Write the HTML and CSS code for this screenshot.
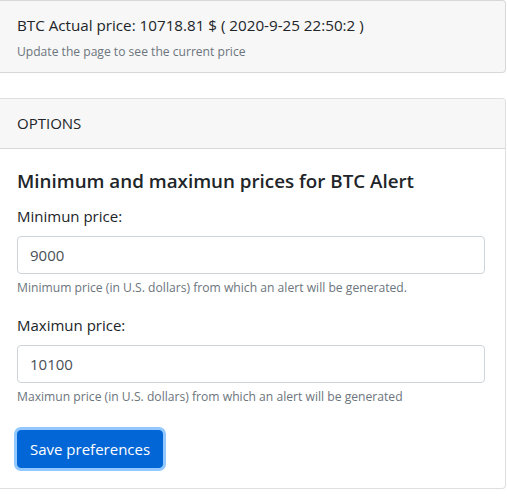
FILE: index.html
```html
<!DOCTYPE html>
<html lang="en">
<head>
<meta charset="utf-8">
<title>BTC Alert</title>
<link rel="stylesheet" href="styles.css">
</head>
<body>
<div class="page">
  <div class="card card-price">
    <div class="price-line">BTC Actual price: 10718.81 $ ( 2020-9-25 22:50:2 )</div>
    <div class="price-note">Update the page to see the current price</div>
  </div>

  <div class="card">
    <div class="card-header">OPTIONS</div>
    <div class="card-body">
      <h5 class="card-title">Minimum and maximun prices for BTC Alert</h5>
      <form>
        <div class="form-group">
          <label class="form-label" for="min">Minimun price:</label>
          <input class="form-control" id="min" type="text" value="9000">
          <small class="form-text">Minimum price (in U.S. dollars) from which an alert will be generated.</small>
        </div>
        <div class="form-group">
          <label class="form-label" for="max">Maximun price:</label>
          <input class="form-control" id="max" type="text" value="10100">
          <small class="form-text">Maximun price (in U.S. dollars) from which an alert will be generated</small>
        </div>
        <button class="btn btn-primary" type="button">Save preferences</button>
      </form>
    </div>
  </div>
</div>
</body>
</html>
```

FILE: styles.css
```css
* { box-sizing: border-box; }

body {
  margin: 0;
  background: #ffffff;
  color: #212529;
  font-family: "Open Sans", "Noto Sans", "Liberation Sans", sans-serif;
  font-size: 15px;
}

.page {
  margin-left: -4px;
  width: 510px;
}

.card {
  border: 1px solid rgba(0, 0, 0, 0.125);
  border-radius: 4px;
  background: #ffffff;
}

.card-price {
  background: #f7f7f7;
  padding: 12px 20px 11px;
  margin-bottom: 25px;
}

.price-line {
  height: 24px;
  line-height: 24px;
  font-size: 15.2px;
}

.price-note {
  height: 24px;
  line-height: 29px;
  font-size: 12.1px;
  color: #6c757d;
}

.card-header {
  background: #f7f7f7;
  height: 50px;
  padding: 12px 20px;
  line-height: 24px;
  border-bottom: 1px solid rgba(0, 0, 0, 0.125);
  border-radius: 3px 3px 0 0;
}

.card-body {
  padding: 20px;
}

.card-title {
  margin: 0 0 11px;
  font-size: 18.8px;
  font-weight: 600;
  line-height: 24px;
}

.form-group {
  margin-bottom: 16px;
}

.form-label {
  display: block;
  line-height: 24px;
  margin-bottom: 8px;
}

.form-control {
  display: block;
  width: 100%;
  height: 38px;
  padding: 6px 12px;
  font-family: inherit;
  font-size: 15px;
  line-height: 24px;
  color: #495057;
  background: #ffffff;
  border: 1px solid #ced4da;
  border-radius: 4px;
}

.form-text {
  display: block;
  margin-top: 4px;
  font-size: 12.15px;
  line-height: 19.2px;
  color: #6c757d;
}

.btn {
  display: inline-block;
  margin-top: 8px;
  height: 38px;
  padding: 6px 12px;
  font-family: inherit;
  font-size: 15px;
  line-height: 24px;
  border-radius: 4px;
  cursor: pointer;
}

.btn-primary {
  color: #ffffff;
  background: #0366d6;
  border: 1px solid #0366d6;
  box-shadow: 0 0 0 3px rgba(38, 143, 255, 0.5);
}
```
